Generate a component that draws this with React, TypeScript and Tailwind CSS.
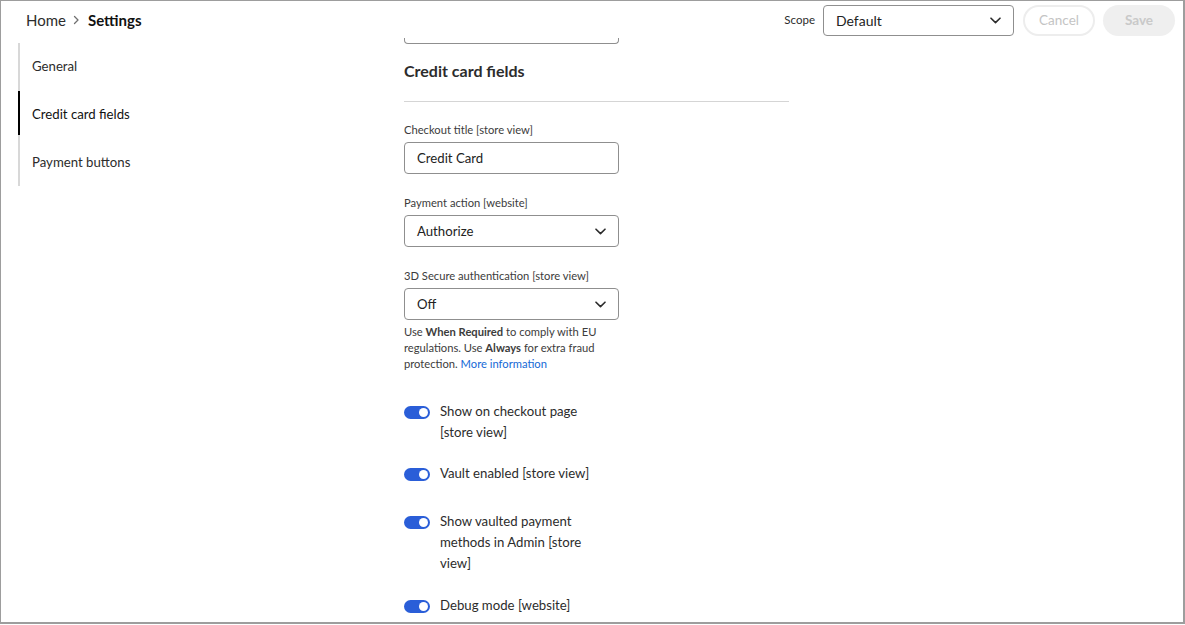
import React from "react";

const FONT = "font-['Lato','Open_Sans',sans-serif]";

function Chevron({ className = "" }: { className?: string }) {
  return (
    <svg width="11" height="7" viewBox="0 0 11 7" className={className} fill="none">
      <path d="M1 1.2L5.5 5.6L10 1.2" stroke="#2c2c2c" strokeWidth="1.6" strokeLinecap="round" strokeLinejoin="round" />
    </svg>
  );
}

function Toggle() {
  return (
    <div className="relative mt-[6px] h-[13px] w-[26px] shrink-0 rounded-full bg-[#2a5ed8]">
      <div className="absolute right-[2px] top-[2px] h-[9px] w-[9px] rounded-full bg-white" />
    </div>
  );
}

function Field({ label, value, select }: { label: string; value: string; select?: boolean }) {
  return (
    <div className="flex flex-col">
      <div className="mb-[4px] pt-[1px] text-[11.2px] leading-4 text-[#3c3c3c]">{label}</div>
      <div className="flex h-[32px] w-[215px] items-center justify-between rounded-[4px] border border-[#8f8f8f] pl-[12px] pr-[12px] pt-[1px] text-[13.2px] text-[#222]">
        <span>{value}</span>
        {select && <Chevron />}
      </div>
    </div>
  );
}

function ToggleRow({ lines, className = "" }: { lines: string[]; className?: string }) {
  return (
    <div className={`flex gap-[10px] ${className}`}>
      <Toggle />
      <div className="pt-[1px] text-[13.2px] leading-[21px] text-[#2c2c2c]">
        {lines.map((l, i) => (
          <div key={i}>{l}</div>
        ))}
      </div>
    </div>
  );
}

export default function App() {
  return (
    <div
      className={`relative h-[624px] w-[1185px] overflow-hidden bg-white ${FONT} border-l border-t border-r-2 border-b-2 border-[#9d9d9d]`}
    >
      {/* top bar */}
      <div className="flex h-[37px] items-center justify-between pl-[25px] pr-[8px] pt-[1px]">
        <div className="flex items-center text-[15px] text-[#2c2c2c]">
          <span>Home</span>
          <svg width="7" height="10" viewBox="0 0 7 10" className="ml-[7px] mr-[8px]" fill="none">
            <path d="M1.5 1.5L5 5L1.5 8.5" stroke="#707070" strokeWidth="1.3" strokeLinecap="round" strokeLinejoin="round" />
          </svg>
          <span className="font-bold text-[#111]">Settings</span>
        </div>
        <div className="flex items-center">
          <span className="mr-[8px] text-[11.5px] text-[#2c2c2c]">Scope</span>
          <div className="flex h-[31px] w-[191px] items-center justify-between rounded-[4px] border border-[#8f8f8f] pl-[12px] pr-[12px] text-[14px] text-[#222]">
            <span>Default</span>
            <Chevron />
          </div>
          <div className="ml-[9px] flex h-[31px] w-[72px] items-center justify-center rounded-full border-2 border-[#ededed] text-[13.5px] text-[#c4c4c4]">
            Cancel
          </div>
          <div className="ml-[8px] flex h-[31px] w-[72px] items-center justify-center rounded-full bg-[#efefef] text-[13.5px] font-bold text-[#c9c9c9]">
            Save
          </div>
        </div>
      </div>

      <div className="flex">
        {/* sidebar */}
        <div className="ml-[17px] mt-[5px] w-[368px] shrink-0">
          <div className="flex w-[200px] flex-col border-l-2 border-[#d8d8d8] text-[13.2px] text-[#2c2c2c]">
            <div className="flex h-[48px] items-center pb-[1px] pl-[12px]">General</div>
            <div className="-ml-[2px] flex h-[44px] items-center border-l-2 border-black pl-[12px] pt-[3px] text-[#111]">
              Credit card fields
            </div>
            <div className="flex h-[51px] items-center pl-[12px] pt-[5px]">Payment buttons</div>
          </div>
        </div>

        {/* main */}
        <div className="ml-[18px] flex flex-col">
          <div className="h-[6px] w-[215px] rounded-b-[4px] border border-t-0 border-[#8f8f8f]" />
          <div className="mt-[15px] text-[16px] font-bold leading-6 text-[#2c2c2c]">Credit card fields</div>
          <div className="mt-[18px] h-px w-[385px] bg-[#d5d5d5]" />
          <div className="mt-[19px] flex flex-col gap-[20px]">
            <Field label="Checkout title [store view]" value="Credit Card" />
            <Field label="Payment action [website]" value="Authorize" select />
            <div className="flex flex-col">
              <Field label="3D Secure authentication [store view]" value="Off" select />
              <div className="mt-[4px] text-[11.2px] leading-4 text-[#3c3c3c]">
                Use <b>When Required</b> to comply with EU
                <br />
                regulations. Use <b>Always</b> for extra fraud
                <br />
                protection. <span className="text-[#1569d6]">More information</span>
              </div>
            </div>
          </div>
          <ToggleRow className="mt-[28px]" lines={["Show on checkout page", "[store view]"]} />
          <ToggleRow className="mt-[19px]" lines={["Vault enabled [store view]"]} />
          <ToggleRow className="mt-[26px]" lines={["Show vaulted payment", "methods in Admin [store", "view]"]} />
          <ToggleRow className="mt-[20px]" lines={["Debug mode [website]"]} />
        </div>
      </div>
    </div>
  );
}
